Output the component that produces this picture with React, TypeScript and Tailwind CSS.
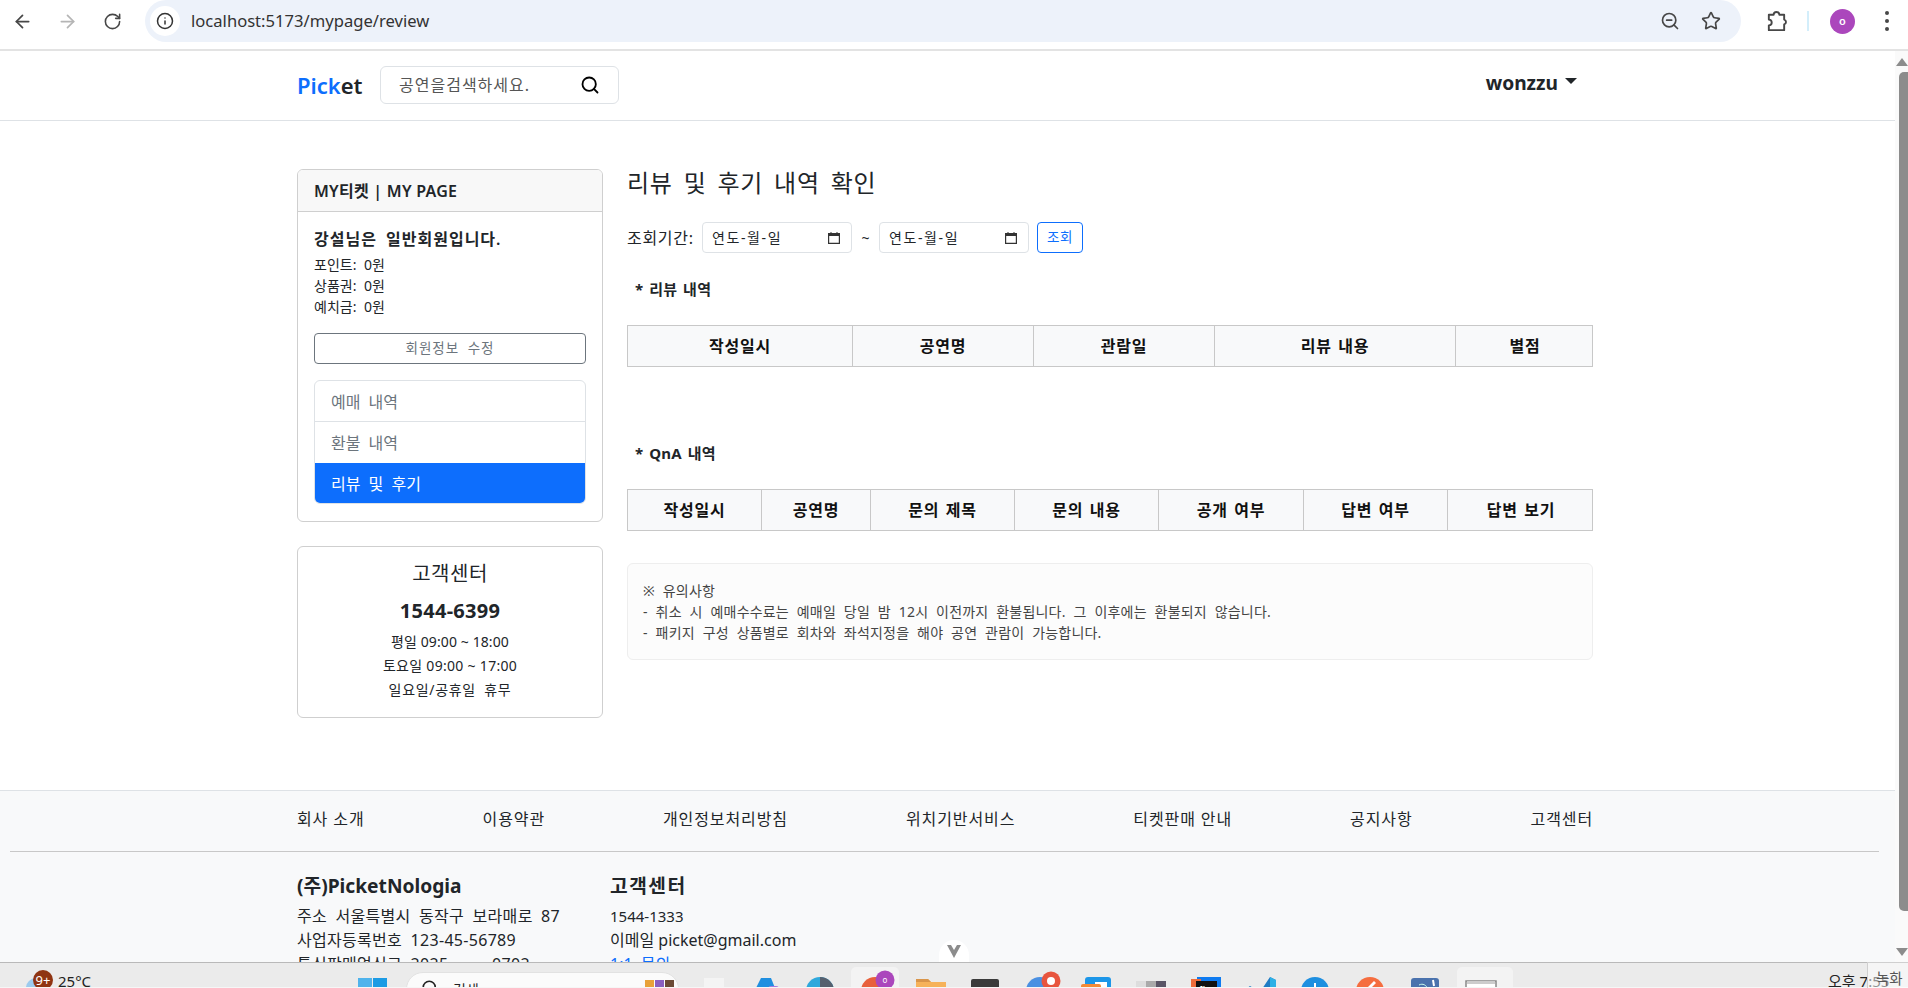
import React from "react";
import { ArrowLeft, ArrowRight, RotateCw, Info, ZoomOut, Star, Search } from "lucide-react";

const font = { fontFamily: '"Noto Sans","Noto Sans CJK KR",sans-serif' };

function BrowserBar() {
  return (
    <div className="h-[51px] shrink-0 bg-white border-b-2 border-[#e3e3e3] flex items-start">
      <div className="flex items-center h-[42px] pl-[12px] w-[145px] shrink-0">
        <ArrowLeft size={21} strokeWidth={2} className="text-[#474747]" />
        <ArrowRight size={21} strokeWidth={2} className="text-[#b5b5b5] ml-[24px]" />
        <RotateCw size={19} strokeWidth={2} className="text-[#474747] ml-[25px]" />
      </div>
      <div className="w-[1596px] h-[42px] rounded-[21px] bg-[#edf2fa] flex items-center pl-[5px] pr-[20px] shrink-0">
        <div className="w-[30px] h-[30px] rounded-full bg-white flex items-center justify-center">
          <Info size={18} strokeWidth={2} className="text-[#333]" />
        </div>
        <span className="ml-[11px] text-[16.6px] text-[#333]">localhost:5173/mypage/review</span>
        <div className="ml-auto flex items-center gap-[21px]">
          <ZoomOut size={20} strokeWidth={2} className="text-[#474747]" />
          <Star size={20} strokeWidth={2} className="text-[#474747]" />
        </div>
      </div>
      <div className="flex items-center h-[42px] flex-1">
        <svg width="23" height="23" viewBox="0 0 24 24" fill="none" stroke="#474747" strokeWidth="2" strokeLinejoin="round" className="ml-[24px]">
          <path d="M4 5H9a3 3 0 0 1 6 0H20V10a2.6 2.6 0 0 1 0 5V21H4V16a3 3 0 0 0 0-6Z" />
        </svg>
        <div className="w-[2px] h-[20px] bg-[#d3eefb] ml-[19px]" />
        <div className="w-[25px] h-[25px] rounded-full bg-[#ab47bc] text-white text-[11px] font-semibold flex items-center justify-center ml-[21px]">o</div>
        <div className="flex flex-col gap-[4px] ml-[30px]">
          <div className="w-[4px] h-[4px] rounded-full bg-[#474747]" />
          <div className="w-[4px] h-[4px] rounded-full bg-[#474747]" />
          <div className="w-[4px] h-[4px] rounded-full bg-[#474747]" />
        </div>
      </div>
    </div>
  );
}

function Header() {
  return (
    <header className="h-[70px] shrink-0 border-b border-[#dee2e6] bg-white">
      <div className="w-[1296px] ml-[297px] h-full flex items-center pb-[2px]">
        <div className="text-[22px] font-semibold leading-none w-[83px]">
          <span className="text-[#0d6efd]">Pick</span><span className="text-[#212529]">et</span>
        </div>
        <div className="w-[239px] h-[38px] border border-[#dee2e6] rounded-md flex items-center pl-[18px] pr-[18px]">
          <span className="text-[16px] tracking-[1px] text-[#555]">공연을검색하세요.</span>
          <Search size={20} strokeWidth={2.2} className="ml-auto text-black" />
        </div>
        <div className="ml-auto flex items-center mr-[16px] mt-[-2px]">
          <span className="text-[19.2px] font-bold text-[#212529]">wonzzu</span>
          <span className="ml-[7px] mb-[4px] w-0 h-0 border-x-[6px] border-x-transparent border-t-[6px] border-t-[#212529]" />
        </div>
      </div>
    </header>
  );
}

function Sidebar() {
  return (
    <aside className="w-[306px] shrink-0">
      <div className="border border-[#cfcfcf] rounded-md h-[353px] overflow-hidden">
        <div className="h-[42px] bg-[#f8f8f8] border-b border-[#cfcfcf] flex items-center pl-[16px] text-[16px] font-semibold text-[#212529] [word-spacing:0] tracking-[0.25px]">MY티켓 | MY PAGE</div>
        <div className="px-[16px] pt-[15px]">
          <div className="text-[16px] font-semibold leading-[24px] text-[#212529] tracking-[1px]">강설님은 일반회원입니다.</div>
          <div className="text-[14px] leading-[21px] mt-[3px] text-[#212529]">
            <div>포인트: 0원</div>
            <div>상품권: 0원</div>
            <div>예치금: 0원</div>
          </div>
          <div className="mt-[16px] h-[31px] border border-[#6c757d] rounded-[4px] flex items-center justify-center text-[13.5px] tracking-[1px] text-[#6c757d]">회원정보 수정</div>
          <div className="mt-[16px] rounded-md border border-[#dee2e6] overflow-hidden text-[16px] text-[#6c757d]">
            <div className="h-[41px] flex items-center pl-[16px] pt-[1px] border-b border-[#dee2e6]">예매 내역</div>
            <div className="h-[41px] flex items-center pl-[16px]">환불 내역</div>
            <div className="h-[41px] flex items-center pl-[17px] pt-[1px] -mx-px -mb-px bg-[#0d6efd] text-white">리뷰 및 후기</div>
          </div>
        </div>
      </div>
      <div className="mt-[24px] border border-[#cfcfcf] rounded-md h-[172px] text-center text-[#212529] pt-[12px]">
        <div className="text-[20px] leading-[30px] tracking-[0.5px]">고객센터</div>
        <div className="text-[20px] font-bold leading-[30px] mt-[7px] tracking-[0.3px]">1544-6399</div>
        <div className="text-[14px] leading-[24px] mt-[4px]">
          <div className="[word-spacing:0] tracking-[0.1px]">평일 09:00 ~ 18:00</div>
          <div className="[word-spacing:0] tracking-[0.3px]">토요일 09:00 ~ 17:00</div>
          <div className="tracking-[0.7px]">일요일/공휴일 휴무</div>
        </div>
      </div>
    </aside>
  );
}

function DateBox() {
  return (
    <div className="w-[150px] h-[31px] border border-[#dee2e6] rounded-[4px] flex items-center pl-[9px] pr-[11px] text-[14px] tracking-[1.6px] text-[#212529]">
      연도-월-일
      <svg viewBox="0 0 12 12" width="12" height="12" className="ml-auto">
        <path d="M0 1h2.5V0h1v1h5V0h1v1H12v11H0z M1.2 4v6.8h9.6V4z" fill="#333" fillRule="evenodd" />
      </svg>
    </div>
  );
}

function Table({ cols }: { cols: [string, number][] }) {
  return (
    <div className="flex h-[42px] border border-[#c8c8c8] bg-[#f8f9fa]">
      {cols.map(([t, w], i) => (
        <div
          key={t}
          style={{ width: w }}
          className={"flex items-center justify-center text-[16px] tracking-[0.8px] [word-spacing:0.1em] font-bold text-[#111] shrink-0 " + (i < cols.length - 1 ? "border-r border-[#c8c8c8]" : "grow")}
        >
          {t}
        </div>
      ))}
    </div>
  );
}

function Main() {
  return (
    <main className="w-[966px] ml-[24px] shrink-0">
      <h1 className="text-[24px] leading-[30px] tracking-[0.75px] text-[#212529] mt-[-1px]">리뷰 및 후기 내역 확인</h1>
      <div className="flex items-center h-[31px] mt-[24px] text-[14px] text-[#212529]">
        <span className="w-[75px] text-[16px] tracking-[0.7px]">조회기간:</span>
        <DateBox />
        <span className="w-[27px] text-center">~</span>
        <DateBox />
        <div className="ml-[8px] w-[46px] h-[31px] border border-[#0d6efd] rounded-[4px] text-[#0d6efd] text-[13.5px] tracking-[0.5px] flex items-center justify-center">조회</div>
      </div>
      <div className="text-[15px] font-bold leading-[24px] tracking-[0.3px] ml-[8px] mt-[24px] text-[#212529] [word-spacing:0.1em]">* 리뷰 내역</div>
      <div className="mt-[24px]">
        <Table cols={[["작성일시", 225], ["공연명", 181], ["관람일", 181], ["리뷰 내용", 241], ["별점", 138]]} />
      </div>
      <div className="text-[15px] font-bold leading-[24px] tracking-[0.3px] ml-[8px] mt-[74px] text-[#212529] [word-spacing:0.1em]">* QnA 내역</div>
      <div className="mt-[24px]">
        <Table cols={[["작성일시", 134], ["공연명", 109], ["문의 제목", 144], ["문의 내용", 144], ["공개 여부", 145], ["답변 여부", 144], ["답변 보기", 146]]} />
      </div>
      <div className="mt-[32px] h-[97px] border border-[#eeeeee] rounded-md bg-[#fcfcfc] pl-[15px] pt-[16px] text-[14px] tracking-[0.2px] leading-[21px] text-[#444]">
        <div>※ 유의사항</div>
        <div>- 취소 시 예매수수료는 예매일 당일 밤 12시 이전까지 환불됩니다. 그 이후에는 환불되지 않습니다.</div>
        <div>- 패키지 구성 상품별로 회차와 좌석지정을 해야 공연 관람이 가능합니다.</div>
      </div>
    </main>
  );
}

function Footer() {
  const links = ["회사 소개", "이용약관", "개인정보처리방침", "위치기반서비스", "티켓판매 안내", "공지사항", "고객센터"];
  return (
    <footer className="grow bg-[#f8f9fa] border-t border-[#dee2e6] text-[#212529]">
      <div className="w-[1296px] ml-[297px] h-[60px] pb-[4px] flex items-center justify-between text-[16px] tracking-[0.9px] [word-spacing:0]">
        {links.map((l) => <span key={l}>{l}</span>)}
      </div>
      <div className="ml-[10px] w-[1869px] h-[1px] bg-[#c8c8c8]" />
      <div className="ml-[297px] flex pt-[20px] text-[16px] leading-[24px]">
        <div className="w-[313px] tracking-[0.3px]">
          <div className="text-[19.2px] font-bold leading-[27px] mb-[5px] tracking-normal">(주)PicketNologia</div>
          <div>주소 서울특별시 동작구 보라매로 87</div>
          <div>사업자등록번호 123-45-56789</div>
          <div>통신판매업신고 2025--------0702</div>
        </div>
        <div>
          <div className="text-[19.2px] font-bold leading-[27px] mb-[5px] tracking-[1.5px]">고객센터</div>
          <div className="text-[15px]">1544-1333</div>
          <div className="[word-spacing:0]">이메일 picket@gmail.com</div>
          <div className="text-[#0d6efd]">1:1 문의</div>
        </div>
      </div>
    </footer>
  );
}

function Scrollbar() {
  return (
    <div className="w-[13px] shrink-0 bg-[#fafafa] flex flex-col items-end overflow-hidden">
      <div className="mt-[7px] w-0 h-0 border-x-[6px] border-x-transparent border-b-[8px] border-b-[#8c8c8c]" />
      <div className="mt-[6px] w-[9px] h-[839px] rounded-l-[5px] bg-[#8c8c8c]" />
      <div className="mt-[37px] w-0 h-0 border-x-[6px] border-x-transparent border-t-[8px] border-t-[#8c8c8c]" />
    </div>
  );
}

const taskIcons: React.ReactNode[] = [
  <g key="a"><rect x="0" y="10" width="10" height="11" fill="#555" /><rect x="8" y="1" width="20" height="20" fill="#f4f4f4" /></g>,
  <g key="b"><path d="M0 21 L10 1 H20 L28 21z" fill="#1f8fe0" /><rect x="17" y="9" width="11" height="8" rx="3" fill="#a57be0" /></g>,
  <g key="c"><circle cx="14" cy="14" r="14" fill="#2ea8dc" /><path d="M14 0a14 14 0 0 1 14 14H18a4 4 0 0 0-4-4z" fill="#56606e" /></g>,
  <g key="d"><rect x="-10" y="-10" width="48" height="40" rx="5" fill="#f3f3f3" /><circle cx="14" cy="14" r="14" fill="#e8603c" /><circle cx="24" cy="3" r="9.5" fill="#ab47bc" /><text x="24" y="6" textAnchor="middle" fontSize="8" fill="#fff">o</text></g>,
  <g key="e"><path d="M0 2h12l3 3h15v15H0z" fill="#f6b25a" /><path d="M0 2h12l3 3H0z" fill="#d9954a" /></g>,
  <rect key="f" x="0" y="2" width="28" height="20" rx="2" fill="#3b3b3b" />,
  <g key="g"><circle cx="14" cy="14" r="14" fill="#4a90e2" /><circle cx="25" cy="4" r="9.5" fill="#e8553e" /><circle cx="25" cy="4" r="4" fill="#fff" /></g>,
  <g key="h"><rect x="4" y="0" width="26" height="20" rx="3" fill="#1c96e8" /><rect x="14" y="5" width="12" height="10" fill="#fff" /><rect x="0" y="7" width="20" height="14" rx="2" fill="#f58a36" /></g>,
  <g key="i"><rect x="0" y="4" width="10" height="6" fill="#ddd" /><rect x="10" y="4" width="10" height="6" fill="#aaa" /><rect x="20" y="4" width="10" height="6" fill="#5a5566" /><rect x="0" y="10" width="30" height="10" fill="#444" /></g>,
  <g key="j"><rect x="6" y="0" width="24" height="20" fill="#0f7bf0" /><rect x="0" y="2" width="10" height="12" fill="#ef6c3a" /><rect x="5" y="4" width="21" height="18" fill="#111" /><text x="9" y="14" fontSize="7" fontWeight="700" fill="#fff">IJ</text></g>,
  <g key="k"><path d="M0 12 L4 9 L14 15 L24 0 L30 3 V20 H0z" fill="#1f7cc4" /><path d="M24 0 L30 3 V20 H24z" fill="#2eb0e6" /></g>,
  <g key="l"><circle cx="14" cy="14" r="14" fill="#1e8fe0" /><rect x="13" y="6" width="2" height="6" fill="#fff" /></g>,
  <g key="m"><circle cx="14" cy="14" r="14" fill="#f56d3f" /><path d="M18 4l2 2-6 6-2-2z" fill="#fff" /></g>,
  <g key="n"><rect x="0" y="1" width="28" height="20" rx="3" fill="#4a72ad" /><path d="M8 8c4-2 7 0 9 4" stroke="#cfe" fill="none" /><path d="M22 3l1 6" stroke="#fff" strokeWidth="2" /></g>,
  <g key="o"><rect x="-9" y="-10" width="56" height="40" rx="5" fill="#f3f3f3" /><rect x="0" y="4" width="30" height="18" fill="#fff" stroke="#888" strokeWidth="1.5" /><rect x="1" y="4" width="28" height="3" fill="#ccc" /><path d="M6 14l3-3 3 3M18 14l3-3 3 3" stroke="#999" fill="none" /></g>,
];

function Taskbar() {
  return (
    <div className="h-[26px] shrink-0 flex flex-col relative">
      <div className="h-[25px] shrink-0 bg-[#ebebeb] border-t border-[#b9b9b9] flex items-start overflow-hidden text-[#222] [word-spacing:0]">
        <svg width="22" height="20" className="ml-[24px] mt-[13px] shrink-0"><circle cx="12" cy="12" r="10" fill="#9ccbee" /></svg>
        <div className="ml-[-13px] mt-[7px] w-[20px] h-[20px] rounded-full bg-[#8f3412] text-white text-[13px] leading-[20px] text-center shrink-0 relative">9+</div>
        <span className="ml-[5px] mt-[8px] text-[15px] leading-[20px] shrink-0">25°C</span>
        <svg width="29" height="20" className="ml-[267px] mt-[15px] shrink-0">
          <rect x="0" y="0" width="14" height="14" fill="#4fb3ec" /><rect x="15" y="0" width="14" height="14" fill="#1c9be4" />
        </svg>
        <div className="ml-[19px] mt-[9px] w-[273px] h-[30px] rounded-t-[17px] bg-[#fbfbfb] border border-[#e2e2e2] flex items-start pl-[14px] pt-[6px] shrink-0">
          <Search size={18} strokeWidth={2.2} className="text-[#222]" />
          <span className="ml-[14px] text-[14px] leading-[22px]">검색</span>
          <div className="ml-auto mr-[4px] mt-[1px] flex gap-[1px]">
            <div className="w-[9px] h-[12px] bg-[#e8a23a]" />
            <div className="w-[9px] h-[12px] bg-[#8a5fc0]" />
            <div className="w-[9px] h-[12px] bg-[#6b4a35]" />
          </div>
        </div>
        <div className="ml-[17px] flex gap-[25px] shrink-0 pt-[14px]">
          {taskIcons.map((icon, i) => (
            <svg key={i} width="30" height="24" viewBox="0 0 30 24" className="shrink-0 overflow-visible">{icon}</svg>
          ))}
        </div>
        <span className="ml-[332px] mt-[8px] text-[15px] leading-[20px] shrink-0 whitespace-nowrap">오후 7:55</span>
      </div>
      <div className="h-[1px] shrink-0 bg-[#f6f6f6]" />
      <div className="absolute right-0 top-0 w-[41px] h-[26px] bg-white/50 border-l border-t border-[#cfcfcf] text-[14.5px] leading-[30px] pl-[8px] text-[#555]">녹화</div>
    </div>
  );
}

export default function App() {
  return (
    <div className="w-[1908px] h-[988px] overflow-hidden flex flex-col bg-white relative [word-spacing:0.25em]" style={font}>
      <BrowserBar />
      <div className="flex h-[911px] shrink-0 overflow-hidden relative">
        <div className="w-[1895px] shrink-0 flex flex-col h-[911px] overflow-hidden">
          <Header />
          <div className="h-[669px] shrink-0 pt-[48px] pl-[297px] flex">
            <Sidebar />
            <Main />
          </div>
          <Footer />
        </div>
        <Scrollbar />
        <div className="absolute left-[939px] bottom-0 w-[30px] h-[22px] bg-white rounded-t-[15px] flex items-center justify-center">
          <svg width="14" height="13" viewBox="0 0 14 13"><path d="M0 0h14L7 13z" fill="#8c8c8c" /><path d="M4 0h6L7 5z" fill="#fff" /></svg>
        </div>
      </div>
      <Taskbar />
    </div>
  );
}
